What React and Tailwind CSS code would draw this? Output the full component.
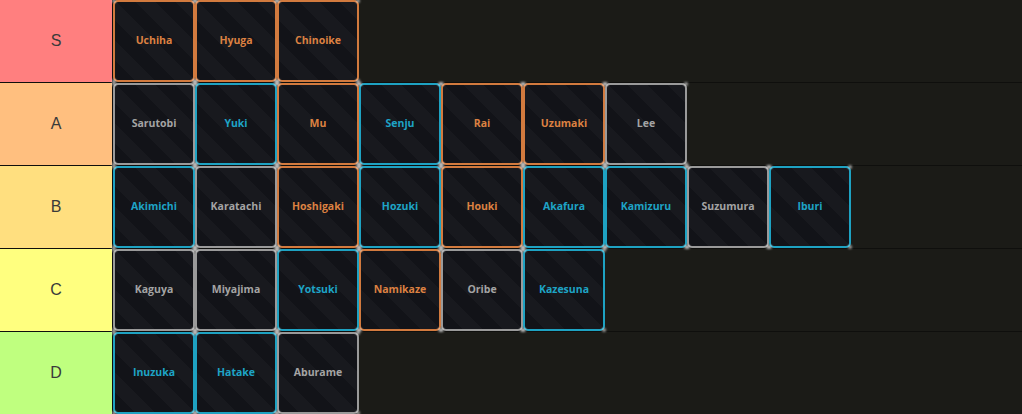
import React from "react";

const tiers = [
  { label: "S", bg: "bg-[#ff7f7f]", items: [["Uchiha", "o"], ["Hyuga", "o"], ["Chinoike", "o"]] },
  { label: "A", bg: "bg-[#ffbf7f]", items: [["Sarutobi", "g"], ["Yuki", "c"], ["Mu", "o"], ["Senju", "c"], ["Rai", "o"], ["Uzumaki", "o"], ["Lee", "g"]] },
  { label: "B", bg: "bg-[#ffdf7f]", items: [["Akimichi", "c"], ["Karatachi", "g"], ["Hoshigaki", "o"], ["Hozuki", "c"], ["Houki", "o"], ["Akafura", "c"], ["Kamizuru", "c"], ["Suzumura", "g"], ["Iburi", "c"]] },
  { label: "C", bg: "bg-[#ffff7f]", items: [["Kaguya", "g"], ["Miyajima", "g"], ["Yotsuki", "c"], ["Namikaze", "o"], ["Oribe", "g"], ["Kazesuna", "c"]] },
  { label: "D", bg: "bg-[#bfff7f]", items: [["Inuzuka", "c"], ["Hatake", "c"], ["Aburame", "g"]] },
];

const styles = {
  o: { border: "border-[#d27a3e]", text: "text-[#dc8142]" },
  c: { border: "border-[#1ea2c2]", text: "text-[#1ea4c6]" },
  g: { border: "border-[#9a9a9a]", text: "text-[#a4a4a4]" },
};

function Dot({ pos }) {
  return <div className={`absolute ${pos} w-[4px] h-[4px] rounded-full bg-white/60 blur-[1px]`} />;
}

function Tile({ name, kind }) {
  const s = styles[kind];
  return (
    <div className="relative w-[82px] h-[82px] shrink-0">
      <div
        className={`w-full h-full rounded-[5px] border-2 ${s.border} bg-[repeating-linear-gradient(45deg,#121318_0px,#121318_14px,#18191e_14px,#18191e_28px)] flex items-center justify-center`}
      >
        <span className={`${s.text} text-[10.5px] font-bold font-['Open_Sans',sans-serif]`}>{name}</span>
      </div>
      <Dot pos="-top-[1px] -left-[1px]" />
      <Dot pos="-top-[1px] -right-[1px]" />
      <Dot pos="-bottom-[1px] -left-[1px]" />
      <Dot pos="-bottom-[1px] -right-[1px]" />
    </div>
  );
}

export default function App() {
  return (
    <div className="w-[1022px] h-[414px] bg-[#0f0f0d] flex flex-col gap-px overflow-hidden">
      {tiers.map((t) => (
        <div key={t.label} className="flex h-[82px] gap-px shrink-0">
          <div className={`w-[112px] shrink-0 ${t.bg} flex items-center justify-center text-[16px] text-[#3a3a3a] font-['Liberation_Sans',Arial,sans-serif]`}>
            {t.label}
          </div>
          <div className="flex-1 bg-[#1b1b17] flex">
            {t.items.map(([n, k]) => (
              <Tile key={n} name={n} kind={k} />
            ))}
          </div>
        </div>
      ))}
    </div>
  );
}
